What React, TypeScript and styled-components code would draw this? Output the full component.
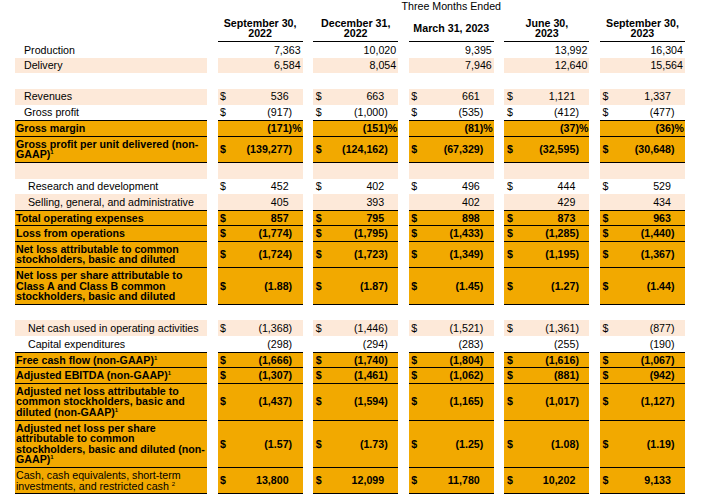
import styled, { createGlobalStyle } from 'styled-components'

type Bg = 'white' | 'peach' | 'orange'

type RowData = {
  label?: React.ReactNode
  values?: string[]
  bg: Bg
  bold?: boolean
  boldValues?: boolean
  indent?: number
  dollar?: boolean
  plain?: boolean
  top?: boolean
  line?: boolean
}

const colors: Record<Bg, string> = {
  white: '#ffffff',
  peach: '#fde9d9',
  orange: '#f2a900'
}

const GlobalStyle = createGlobalStyle`
  body {
    margin: 0;
    background: #fff;
    color: #000;
    font-family: 'Liberation Sans', Arial, sans-serif;
  }
`

const Page = styled.div`
  padding: 1px 0 0 15px;
  font-size: 10.67px;
  line-height: 10.6px;
`

const Table = styled.div`
  display: grid;
  grid-template-columns: 192px repeat(5, 85px);
  column-gap: 10.6px;
`

const Caption = styled.div`
  grid-column: 2 / -1;
  text-align: center;
`

const HeadCell = styled.div`
  display: flex;
  align-items: center;
  justify-content: center;
  text-align: center;
  font-weight: bold;
  padding: 6px 0 2.4px;
  border-bottom: 1px solid #000;
`

const Row = styled.div`
  display: contents;
`

const Cell = styled.div<{ $bg: Bg; $bold?: boolean; $top?: boolean; $line?: boolean }>`
  background: ${p => colors[p.$bg]};
  font-weight: ${p => (p.$bold ? 'bold' : 'normal')};
  padding-top: ${p => (p.$line ? '2px' : '2.5px')};
  padding-bottom: ${p => (p.$line ? '2px' : '2.5px')};
  border-top: ${p => (p.$top ? '1px solid #000' : '0')};
  border-bottom: ${p => (p.$line ? '1px solid #000' : '0')};
`

const LabelCell = styled(Cell)<{ $indent: number }>`
  padding-left: ${p => p.$indent}px;
  padding-right: 2px;
`

const ValueCell = styled(Cell)`
  display: flex;
  align-items: center;
  justify-content: space-between;
  padding-left: 2.5px;
  padding-right: 2px;
  white-space: nowrap;
`

const Amount = styled.span`
  display: flex;
  margin-left: auto;
`

const Tail = styled.span`
  width: 12px;
  text-align: left;
`

const Sup = styled.span`
  font-size: 6px;
  line-height: 1;
  vertical-align: top;
`

const one = <Sup>1</Sup>

const heads = [
  ['September 30,', '2022'],
  ['December 31,', '2022'],
  ['March 31, 2023'],
  ['June 30,', '2023'],
  ['September 30,', '2023']
]

const rows: RowData[] = [
  { label: 'Production', values: ['7,363', '10,020', '9,395', '13,992', '16,304'], bg: 'white', indent: 9, plain: true },
  { label: 'Delivery', values: ['6,584', '8,054', '7,946', '12,640', '15,564'], bg: 'peach', indent: 9, plain: true },
  { bg: 'white' },
  { label: 'Revenues', values: ['536', '663', '661', '1,121', '1,337'], bg: 'peach', indent: 9, dollar: true },
  { label: 'Gross profit', values: ['(917)', '(1,000)', '(535)', '(412)', '(477)'], bg: 'white', indent: 9, dollar: true },
  { label: 'Gross margin', values: ['(171)%', '(151)%', '(81)%', '(37)%', '(36)%'], bg: 'orange', bold: true, top: true, line: true },
  {
    label: <>Gross profit per unit delivered (non-GAAP){one}</>,
    values: ['(139,277)', '(124,162)', '(67,329)', '(32,595)', '(30,648)'],
    bg: 'orange', bold: true, dollar: true, line: true
  },
  { bg: 'peach' },
  { label: 'Research and development', values: ['452', '402', '496', '444', '529'], bg: 'white', indent: 13, dollar: true },
  { label: 'Selling, general, and administrative', values: ['405', '393', '402', '429', '434'], bg: 'peach', indent: 13 },
  { label: 'Total operating expenses', values: ['857', '795', '898', '873', '963'], bg: 'orange', bold: true, dollar: true, top: true, line: true },
  { label: 'Loss from operations', values: ['(1,774)', '(1,795)', '(1,433)', '(1,285)', '(1,440)'], bg: 'orange', bold: true, dollar: true, line: true },
  {
    label: 'Net loss attributable to common stockholders, basic and diluted',
    values: ['(1,724)', '(1,723)', '(1,349)', '(1,195)', '(1,367)'],
    bg: 'orange', bold: true, dollar: true, line: true
  },
  {
    label: 'Net loss per share attributable to Class A and Class B common stockholders, basic and diluted',
    values: ['(1.88)', '(1.87)', '(1.45)', '(1.27)', '(1.44)'],
    bg: 'orange', bold: true, dollar: true, line: true
  },
  { bg: 'white' },
  { label: 'Net cash used in operating activities', values: ['(1,368)', '(1,446)', '(1,521)', '(1,361)', '(877)'], bg: 'peach', indent: 13, dollar: true },
  { label: 'Capital expenditures', values: ['(298)', '(294)', '(283)', '(255)', '(190)'], bg: 'white', indent: 13 },
  {
    label: <>Free cash flow (non-GAAP){one}</>,
    values: ['(1,666)', '(1,740)', '(1,804)', '(1,616)', '(1,067)'],
    bg: 'orange', bold: true, dollar: true, top: true, line: true
  },
  {
    label: <>Adjusted EBITDA (non-GAAP){one}</>,
    values: ['(1,307)', '(1,461)', '(1,062)', '(881)', '(942)'],
    bg: 'orange', bold: true, dollar: true, line: true
  },
  {
    label: <>Adjusted net loss attributable to common stockholders, basic and diluted (non-GAAP){one}</>,
    values: ['(1,437)', '(1,594)', '(1,165)', '(1,017)', '(1,127)'],
    bg: 'orange', bold: true, dollar: true, line: true
  },
  {
    label: <>Adjusted net loss per share attributable to common stockholders, basic and diluted (non-GAAP){one}</>,
    values: ['(1.57)', '(1.73)', '(1.25)', '(1.08)', '(1.19)'],
    bg: 'orange', bold: true, dollar: true, line: true
  },
  {
    label: <>Cash, cash equivalents, short-term investments, and restricted cash <Sup>2</Sup></>,
    values: ['13,800', '12,099', '11,780', '10,202', '9,133'],
    bg: 'orange', boldValues: true, dollar: true, line: true
  }
]

// split "(171)%" into the digits and the part that hangs past them
function splitValue(v: string) {
  const m = v.match(/^\(?([^)%]*)(\)?%?)$/)
  if (!m) return { body: v, tail: '' }
  return { body: (v.startsWith('(') ? '(' : '') + m[1], tail: m[2] }
}

function App() {
  return (
    <Page>
      <GlobalStyle />
      <Table>
        <Caption>Three Months Ended</Caption>
        <div />
        {heads.map((h, i) => (
          <HeadCell key={i}>
            <div>
              {h.map((t, j) => (
                <div key={j}>{t}</div>
              ))}
            </div>
          </HeadCell>
        ))}

        {rows.map((r, i) => {
          const vb = r.bold || r.boldValues
          return (
            <Row key={i}>
              <LabelCell $bg={r.bg} $bold={r.bold} $top={r.top} $line={r.line} $indent={r.bold ? 1 : r.indent ?? 1}>
                {r.label ?? '\u00a0'}
              </LabelCell>
              {(r.values ?? ['', '', '', '', '']).map((v, j) => {
                const { body, tail } = splitValue(v)
                return (
                  <ValueCell key={j} $bg={r.bg} $bold={vb} $top={r.top} $line={r.line}>
                    <span>{r.dollar ? '$' : ''}</span>
                    <Amount>
                      <span>{body || '\u00a0'}</span>
                      {!r.plain && <Tail>{tail}</Tail>}
                    </Amount>
                  </ValueCell>
                )
              })}
            </Row>
          )
        })}
      </Table>
    </Page>
  )
}

export default App
